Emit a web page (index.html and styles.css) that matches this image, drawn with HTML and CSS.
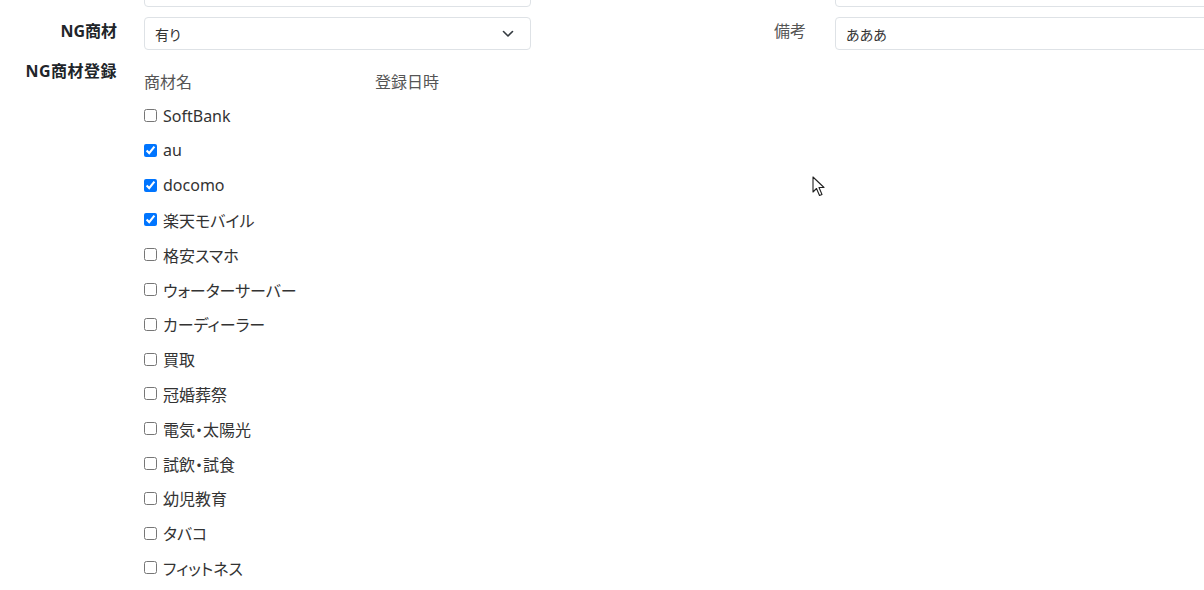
FILE: index.html
```html
<!DOCTYPE html>
<html lang="ja">
<head>
    <meta charset="UTF-8">
    <meta name="viewport" content="width=device-width, initial-scale=1.0">
    <title>NG商材</title>
    <link rel="stylesheet" href="styles.css">
</head>
<body>

<div class="form">
    <div class="form-row">
        <div class="field">
            <label class="label"></label>
            <input type="text" class="control" value="">
        </div>
        <div class="field field-right">
            <label class="label"></label>
            <input type="text" class="control control-wide" value="">
        </div>
    </div>

    <div class="form-row">
        <div class="field">
            <label class="label">NG商材</label>
            <div class="control select">
                <span>有り</span>
                <svg class="chevron" width="12" height="8" viewBox="0 0 12 8"><path d="M1.5 1.5 6 6 10.5 1.5" fill="none" stroke="#343a40" stroke-width="1.6" stroke-linecap="round" stroke-linejoin="round"/></svg>
            </div>
        </div>
        <div class="field field-right">
            <label class="label label-light">備考</label>
            <input type="text" class="control control-wide" value="あああ">
        </div>
    </div>

    <div class="form-row list-row">
        <div class="field">
            <label class="label label-top">NG商材登録</label>
            <div class="ng-list">
                <div class="ng-head">
                    <span class="col-name">商材名</span>
                    <span class="col-date">登録日時</span>
                </div>
                <label class="ng-item"><input type="checkbox">SoftBank</label>
                <label class="ng-item"><input type="checkbox" checked>au</label>
                <label class="ng-item"><input type="checkbox" checked>docomo</label>
                <label class="ng-item"><input type="checkbox" checked>楽天モバイル</label>
                <label class="ng-item"><input type="checkbox">格安スマホ</label>
                <label class="ng-item"><input type="checkbox">ウォーターサーバー</label>
                <label class="ng-item"><input type="checkbox">カーディーラー</label>
                <label class="ng-item"><input type="checkbox">買取</label>
                <label class="ng-item"><input type="checkbox">冠婚葬祭</label>
                <label class="ng-item"><input type="checkbox">電気・太陽光</label>
                <label class="ng-item"><input type="checkbox">試飲・試食</label>
                <label class="ng-item"><input type="checkbox">幼児教育</label>
                <label class="ng-item"><input type="checkbox">タバコ</label>
                <label class="ng-item"><input type="checkbox">フィットネス</label>
            </div>
        </div>
    </div>
</div>

<!-- mouse pointer seen in the capture -->
<svg class="cursor" width="14" height="22" viewBox="0 0 14 22"><path d="M1 1 L1 16 L4.5 12.5 L7.5 19.5 L10 18.5 L7 11.5 L12 11.5 Z" fill="#fff" stroke="#222" stroke-width="1.1" stroke-linejoin="round"/></svg>

</body>
</html>
```

FILE: styles.css
```css
body {
    margin: 0;
    padding: 0;
    overflow: hidden; /* wide form runs past the window */
    background: #fff;
    color: #212529;
    font-family: "Noto Sans", "Noto Sans CJK JP", sans-serif;
    font-size: 16px;
    font-feature-settings: "palt"; /* proportional kana, like the original font */
}
.form {
    margin-top: -26px; /* page is scrolled a little */
    display: flex;
    flex-direction: column;
    gap: 10px;
}
.form-row {
    display: flex;
}
.list-row {
    margin-top: 3px;
}
.field {
    display: flex;
    align-items: center;
    gap: 27px;
}
.field-right {
    margin-left: 158px;
    gap: 29px;
}
.label {
    width: 117px;
    text-align: right;
    font-weight: bold;
    font-size: 16px;
    line-height: 20px;
    padding-bottom: 5px;
    color: #212529;
}
.label-light {
    font-weight: normal;
    color: #555;
}
.list-row .field {
    align-items: flex-start;
}
.label-top {
    padding-bottom: 0;
    margin-top: -2px;
    letter-spacing: 0.5px;
}
.control {
    box-sizing: border-box;
    width: 387px;
    height: 33px;
    padding: 0 10px;
    border: 1px solid #dee2e6;
    border-radius: 4px;
    background: #fff;
    font-family: inherit;
    font-size: 14px;
    font-feature-settings: "palt";
    color: #333;
    outline: none;
}
.control-wide {
    width: 420px;
}
.select {
    display: flex;
    align-items: center;
    justify-content: space-between;
    padding-right: 16px;
}
.chevron {
    display: block;
}
.ng-list {
    display: flex;
    flex-direction: column;
    margin-top: 0.5px;
}
.ng-head {
    display: flex;
    height: 34.7px;
    align-items: center;
    color: #555;
}
.col-name {
    width: 231px;
}
.ng-item {
    display: flex;
    align-items: center;
    height: 34.8px;
    color: #333;
}
.ng-item input {
    width: 13px;
    height: 13px;
    margin: 0 6px 0 0;
}
.cursor {
    position: absolute;
    left: 812px;
    top: 176px;
}
```
